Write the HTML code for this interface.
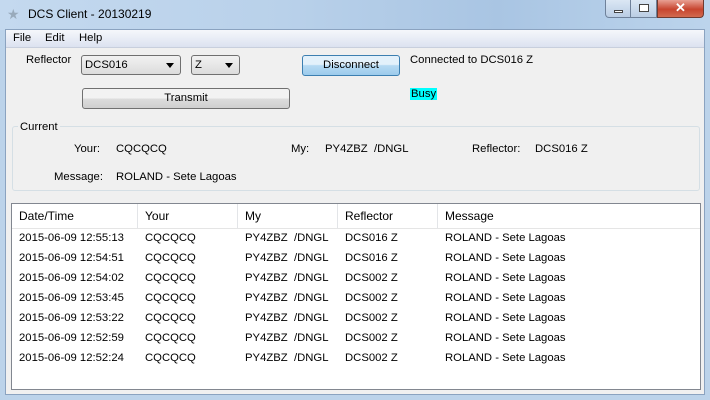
<!DOCTYPE html><html><head><style>
*{margin:0;padding:0;box-sizing:border-box}
body{width:710px;height:400px;overflow:hidden;background:#bcd3ea;font-family:"Liberation Sans",sans-serif;font-size:11.3px;color:#000;position:relative}
.a{position:absolute;white-space:nowrap}
.title{left:0;top:0;width:710px;height:30px;background:linear-gradient(90deg,#c4d9ef,#b9d1ea 40%,#a9c5e3 70%,#bcd4ec)}
.client{left:5px;top:29px;width:700px;height:366px;background:#f0f0f0;border:1px solid #8ba3c0}
.menu{left:6px;top:30px;width:698px;height:18px;background:linear-gradient(#f5f7fb,#dce2f0);border-bottom:1px solid #c8cfdd}
.cb{background:linear-gradient(#f2f2f2,#dcdcdc);border:1px solid #707070;border-radius:3px;height:20px}
.arr{position:absolute;right:6px;top:7px;width:0;height:0;border-left:4px solid transparent;border-right:4px solid transparent;border-top:5px solid #000}
.btn{background:linear-gradient(#f2f2f2 50%,#dddddd 50%,#cfcfcf);border:1px solid #707070;border-radius:3px;text-align:center;line-height:18px}
.tbl{left:11px;top:203px;width:690px;height:187px;background:#fff;border:1px solid #828790}
.hd{position:absolute;top:0;height:25px;line-height:24px;border-right:1px solid #e3e5e8;padding-left:7px;background:#fff;border-bottom:1px solid #e5e5e5;font-size:12px}
.row{position:absolute;left:0;height:20px;line-height:20px}
.row span{position:absolute}
</style></head><body>
<div class="a title"></div>
<div class="a" style="left:7px;top:6px;color:#9ab;font-size:14px">★</div>
<div class="a" style="left:28px;top:7px;font-size:12px">DCS Client - 20130219</div>
<div class="a" style="left:605px;top:0;width:26px;height:18px;border:1px solid #6f819a;border-top:none;border-radius:0 0 0 4px;background:linear-gradient(#dbe7f4,#bacde4)"><div style="position:absolute;left:8px;top:10px;width:9px;height:3px;border:1px solid #444;background:#fff"></div></div>
<div class="a" style="left:631px;top:0;width:26px;height:18px;border:1px solid #6f819a;border-top:none;border-left:none;background:linear-gradient(#dbe7f4,#bacde4)"><div style="position:absolute;left:8px;top:4px;width:10px;height:8px;border:1px solid #444;background:#fff"></div></div>
<div class="a" style="left:657px;top:0;width:47px;height:18px;border:1px solid #6f3a30;border-top:none;border-radius:0 0 4px 0;background:linear-gradient(#e8a093,#c7452f 55%,#d26a4f);color:#fff;font-weight:bold;text-align:center;font-size:13px;line-height:16px">✕</div>
<div class="a client"></div>
<div class="a menu"></div>
<div class="a" style="left:13px;top:32px">File</div>
<div class="a" style="left:45px;top:32px">Edit</div>
<div class="a" style="left:79px;top:32px">Help</div>
<div class="a" style="left:26px;top:54px">Reflector</div>
<div class="a cb" style="left:81px;top:55px;width:100px"><span class="a" style="left:3px;top:3px">DCS016</span><div class="arr"></div></div>
<div class="a cb" style="left:191px;top:55px;width:49px"><span class="a" style="left:3px;top:3px">Z</span><div class="arr"></div></div>
<div class="a btn" style="left:302px;top:55px;width:98px;height:21px;background:linear-gradient(#e3f1fb 45%,#b6daf3 50%,#9ccbec);border-color:#3c7fb1;line-height:19px">Disconnect</div>
<div class="a" style="left:410px;top:54px">Connected to DCS016 Z</div>
<div class="a" style="left:410px;top:88px;background:#0ff;padding:0 1px;line-height:12px">Busy</div>
<div class="a btn" style="left:82px;top:88px;width:208px;height:21px">Transmit</div>
<div class="a" style="left:12px;top:126px;width:688px;height:65px;border:1px solid #d5dfe5;border-radius:3px"></div>
<div class="a" style="left:18px;top:121px;background:#f0f0f0;padding:0 2px">Current</div>
<div class="a" style="left:74px;top:143px">Your:</div>
<div class="a" style="left:116px;top:143px">CQCQCQ</div>
<div class="a" style="left:291px;top:143px">My:</div>
<div class="a" style="left:325px;top:143px">PY4ZBZ&nbsp;&nbsp;/DNGL</div>
<div class="a" style="left:472px;top:143px">Reflector:</div>
<div class="a" style="left:535px;top:143px">DCS016 Z</div>
<div class="a" style="left:54px;top:171px">Message:</div>
<div class="a" style="left:116px;top:171px">ROLAND - Sete Lagoas</div>
<div class="a tbl">
<div class="hd" style="left:0;width:126px">Date/Time</div>
<div class="hd" style="left:126px;width:100px">Your</div>
<div class="hd" style="left:226px;width:100px">My</div>
<div class="hd" style="left:326px;width:100px">Reflector</div>
<div class="hd" style="left:426px;width:262px;border-right:none">Message</div>
<div class="row" style="top:24px"><span style="left:7px">2015-06-09 12:55:13</span><span style="left:133px">CQCQCQ</span><span style="left:233px">PY4ZBZ&nbsp;&nbsp;/DNGL</span><span style="left:333px">DCS016 Z</span><span style="left:433px">ROLAND - Sete Lagoas</span></div>
<div class="row" style="top:44px"><span style="left:7px">2015-06-09 12:54:51</span><span style="left:133px">CQCQCQ</span><span style="left:233px">PY4ZBZ&nbsp;&nbsp;/DNGL</span><span style="left:333px">DCS016 Z</span><span style="left:433px">ROLAND - Sete Lagoas</span></div>
<div class="row" style="top:64px"><span style="left:7px">2015-06-09 12:54:02</span><span style="left:133px">CQCQCQ</span><span style="left:233px">PY4ZBZ&nbsp;&nbsp;/DNGL</span><span style="left:333px">DCS002 Z</span><span style="left:433px">ROLAND - Sete Lagoas</span></div>
<div class="row" style="top:84px"><span style="left:7px">2015-06-09 12:53:45</span><span style="left:133px">CQCQCQ</span><span style="left:233px">PY4ZBZ&nbsp;&nbsp;/DNGL</span><span style="left:333px">DCS002 Z</span><span style="left:433px">ROLAND - Sete Lagoas</span></div>
<div class="row" style="top:104px"><span style="left:7px">2015-06-09 12:53:22</span><span style="left:133px">CQCQCQ</span><span style="left:233px">PY4ZBZ&nbsp;&nbsp;/DNGL</span><span style="left:333px">DCS002 Z</span><span style="left:433px">ROLAND - Sete Lagoas</span></div>
<div class="row" style="top:124px"><span style="left:7px">2015-06-09 12:52:59</span><span style="left:133px">CQCQCQ</span><span style="left:233px">PY4ZBZ&nbsp;&nbsp;/DNGL</span><span style="left:333px">DCS002 Z</span><span style="left:433px">ROLAND - Sete Lagoas</span></div>
<div class="row" style="top:144px"><span style="left:7px">2015-06-09 12:52:24</span><span style="left:133px">CQCQCQ</span><span style="left:233px">PY4ZBZ&nbsp;&nbsp;/DNGL</span><span style="left:333px">DCS002 Z</span><span style="left:433px">ROLAND - Sete Lagoas</span></div>
</div>
</body></html>
